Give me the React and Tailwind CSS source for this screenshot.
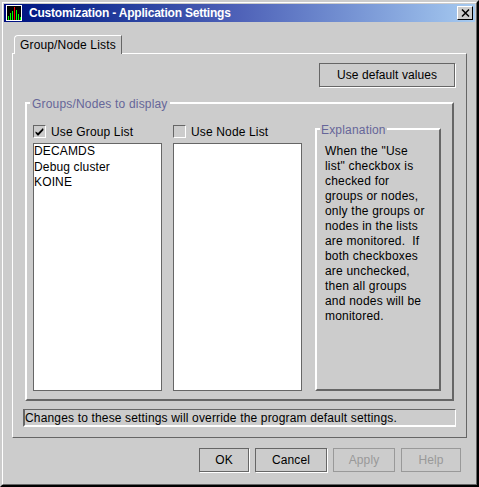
const font = { fontFamily: '"Liberation Sans", Arial, sans-serif' };

function Btn({ label, w }) {
  return (
    <div className={`${w} h-[24px] border border-[#666666] shadow-[1px_1px_0_#ffffff] flex items-center justify-center text-[12px] tracking-[0.1px] text-black`}>
      {label}
    </div>
  );
}

function DisabledBtn({ label, w }) {
  return (
    <div className={`${w} h-[24px] border border-[#999999] flex items-center justify-center text-[12px] tracking-[0.1px] text-[#999999]`}>
      {label}
    </div>
  );
}

function Check({ checked }) {
  return (
    <div className="w-[13px] h-[13px] border border-t-[#666666] border-l-[#666666] border-r-white border-b-white flex items-center justify-center">
      {checked && (
        <svg width="9" height="9" viewBox="0 0 9 9">
          <path d="M0.5 4.5 L3 6 L8 1 L8.5 3 L3.5 8.5 L2.5 8.5 L0.5 6 Z" fill="#000" />
        </svg>
      )}
    </div>
  );
}

function ListBox({ items = [] }) {
  return (
    <div className="w-[129px] h-[248px] bg-white border border-[#666666] text-[12px] leading-[15.5px] tracking-[0.15px] text-black">
      {items.map((t) => (
        <div key={t}>{t}</div>
      ))}
    </div>
  );
}

export default function App() {
  return (
    <div style={font} className="w-[479px] h-[487px] bg-[#cccccc] border-2 border-t-[#cccccc] border-l-[#cccccc] border-r-black border-b-black">
      <div className="w-full h-full border border-t-white border-l-white border-r-[#666666] border-b-[#666666] p-px flex flex-col">
        {/* Title bar */}
        <div className="h-[18px] flex items-center bg-gradient-to-r from-[#000c80] via-[#4f62b8] to-[#a6caf0] pl-[2px] pr-[2px]">
          <svg width="16" height="16" viewBox="0 0 16 16" className="shrink-0">
            <rect x="0.5" y="0.5" width="15" height="15" fill="#000" stroke="#fff" />
            <path d="M2.5 15V11M4.5 15V8M6.5 15V6" stroke="#00ff00" />
            <path d="M8.5 15V2" stroke="#ff0000" />
            <path d="M10.5 15V5M12.5 15V9M14.5 15V12" stroke="#00ff00" />
          </svg>
          <span className="ml-[7px] text-white font-bold text-[12px] tracking-[-0.2px] whitespace-nowrap">Customization - Application Settings</span>
          <div className="ml-auto w-[16px] h-[14px] bg-[#cccccc] border border-t-white border-l-white border-r-black border-b-black flex items-center justify-center">
            <svg width="9" height="8" viewBox="0 0 9 8">
              <path d="M1 0.5L8 7.5M8 0.5L1 7.5" stroke="#000" strokeWidth="1.5" />
            </svg>
          </div>
        </div>

        {/* Tab */}
        <div className="ml-[10px] mt-[13px] w-[108px] h-[19px] border-l border-t border-white border-r border-r-[#666666] rounded-tl-[4px] flex items-center pl-[5px] text-[12px] tracking-[0.15px] text-black relative z-10 -mb-px bg-[#cccccc]">
          Group/Node Lists
        </div>

        {/* Panel */}
        <div className="ml-[8px] w-[455px] h-[385px] border border-t-white border-l-white border-r-[#666666] border-b-[#666666] flex flex-col">
          <div className="self-end mr-[11px] mt-[9px] mb-px w-[136px] h-[24px] border border-[#666666] shadow-[1px_1px_0_#ffffff] flex items-center justify-center text-[12px] tracking-[0.07px] text-black">
            Use default values
          </div>

          {/* Group box */}
          <div className="relative ml-[12px] mt-[14px] w-[429px] h-[299px] border-2 border-t-white border-l-white border-r-[#666666] border-b-[#666666] flex gap-[11px] pl-[6px]">
            <div className="absolute left-[3px] -top-[7px] px-[2px] bg-[#cccccc] text-[12px] leading-[14px] tracking-[0.18px] text-[#666699] whitespace-nowrap">
              Groups/Nodes to display
            </div>
            <div className="flex flex-col">
              <div className="mt-[21px] h-[13px] flex items-center gap-[5px] text-[12px] tracking-[0.15px] text-black">
                <Check checked /> Use Group List
              </div>
              <div className="mt-[5px]">
                <ListBox items={["DECAMDS", "Debug cluster", "KOINE"]} />
              </div>
            </div>
            <div className="flex flex-col">
              <div className="mt-[21px] h-[13px] flex items-center gap-[5px] text-[12px] tracking-[0.15px] text-black">
                <Check /> Use Node List
              </div>
              <div className="mt-[5px]">
                <ListBox />
              </div>
            </div>
            {/* Explanation */}
            <div className="relative ml-[2px] mt-[24px] w-[126px] h-[263px] border-2 border-t-white border-l-white border-r-[#666666] border-b-[#666666] pl-[8px] pt-[14px] text-[12px] leading-[15px] tracking-[0.2px] text-black">
              <div className="absolute left-[3px] -top-[7px] px-[1px] bg-[#cccccc] leading-[14px] tracking-[0.18px] text-[#666699]">
                Explanation
              </div>
              When the "Use<br />list" checkbox is<br />checked for<br />groups or nodes,<br />only the groups or<br />nodes in the lists<br />are monitored.&nbsp; If<br />both checkboxes<br />are unchecked,<br />then all groups<br />and nodes will be<br />monitored.
            </div>
          </div>

          {/* Status */}
          <div className="ml-[10px] mt-[8px] w-[433px] h-[18px] border-2 border-t border-t-[#666666] border-l-[#666666] border-r border-r-white border-b-white flex items-center text-[12px] tracking-[0.16px] text-black whitespace-nowrap">
            Changes to these settings will override the program default settings.
          </div>
        </div>

        {/* Buttons */}
        <div className="mt-[10px] ml-[195px] flex gap-[6px]">
          <Btn label="OK" w="w-[50px]" />
          <Btn label="Cancel" w="w-[72px]" />
          <DisabledBtn label="Apply" w="w-[62px]" />
          <DisabledBtn label="Help" w="w-[60px]" />
        </div>
      </div>
    </div>
  );
}
